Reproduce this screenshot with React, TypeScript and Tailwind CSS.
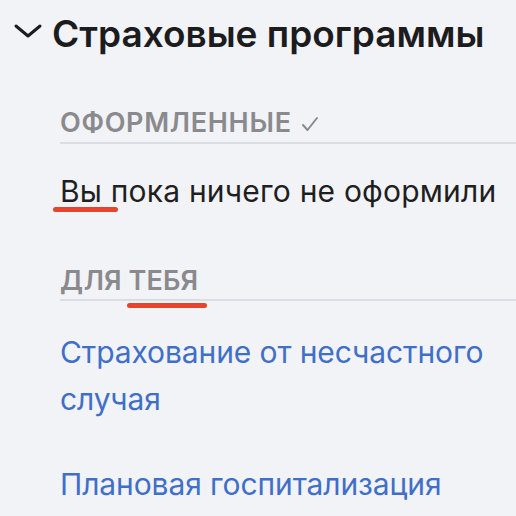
import React from 'react';

const links = ['Страхование от несчастного случая', 'Плановая госпитализация'];

const App: React.FC = () => {
  return (
    <div className="w-[516px] h-[516px] overflow-hidden bg-[#f2f3f7] font-['Inter',sans-serif]">
      {/* Header */}
      <div className="flex items-start pt-[12px] pl-[13px]">
        <svg width="30" height="16" viewBox="0 0 30 16" className="mt-[11px] mr-[9px] shrink-0">
          <path d="M3 3 L15 13 L27 3" fill="none" stroke="#1c1c1e" strokeWidth="3" strokeLinecap="round" strokeLinejoin="round" />
        </svg>
        <h1 className="text-[37px] leading-[44px] font-semibold text-[#1c1c1e]">Страховые программы</h1>
      </div>

      <div className="pl-[60px] pt-[51px]">
        {/* Issued */}
        <div className="flex items-center gap-[9px] border-b-2 border-[#dcdde2] pb-[3px]">
          <span className="text-[27px] leading-[32px] font-semibold text-[#8a8a8e] tracking-[0.7px]">ОФОРМЛЕННЫЕ</span>
          <svg width="18" height="16" viewBox="0 0 18 16" className="mt-[2px]">
            <path d="M2 9 L6.5 14 L16 2" fill="none" stroke="#8a8a8e" strokeWidth="2" strokeLinecap="round" strokeLinejoin="round" />
          </svg>
        </div>
        <p className="relative mt-[27px] text-[30px] leading-[40px] text-[#1f1f22] tracking-[0.2px]">
          Вы пока ничего не оформили
          <span className="absolute left-[-7px] top-[36px] h-[5px] w-[65px] rounded-full bg-[#e8432b]" />
        </p>

        {/* For you */}
        <div className="relative mt-[54px] border-b-2 border-[#dcdde2] pb-[2px]">
          <span className="text-[27px] leading-[32px] font-semibold text-[#8a8a8e] tracking-[0.1px]">ДЛЯ ТЕБЯ</span>
          <span className="absolute left-[67px] top-[38px] h-[5px] w-[80px] rounded-full bg-[#e8432b]" />
        </div>

        <div className="mt-[28px] flex flex-col gap-[38px] pr-[20px]">
          {links.map(link => (
            <a key={link} href="#" className="text-[30px] leading-[47px] text-[#3f6fc8] tracking-[-0.1px]">
              {link}
            </a>
          ))}
        </div>
      </div>
    </div>
  );
};

export default App;
